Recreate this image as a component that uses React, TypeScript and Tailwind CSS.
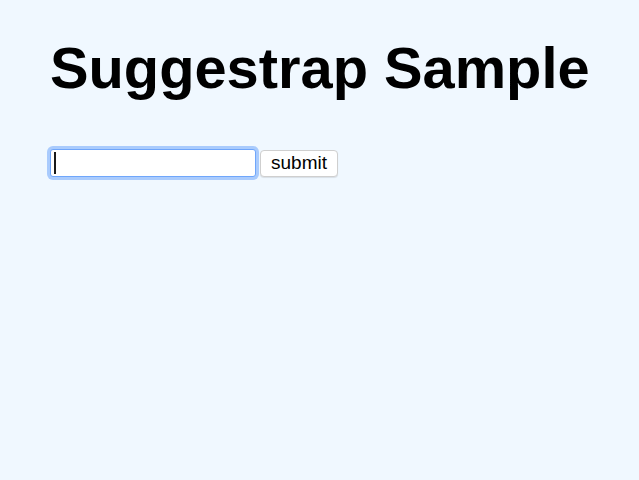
export default function App() {
  return (
    <div className="min-h-[480px] bg-[#f0f8ff] px-[50px] pt-[38px] font-['Liberation_Sans',Arial,sans-serif] text-black">
      <h1 className="whitespace-nowrap text-[57.8px] font-bold leading-[60px]">Suggestrap Sample</h1>
      <form className="mt-[51px] flex items-center gap-[4px]" onSubmit={(e) => e.preventDefault()}>
        <div className="relative">
          <input
            type="text"
            autoFocus
            className="block h-[28px] w-[206px] rounded-[3px] border border-[#6fa6fb] bg-white px-[3px] text-[19px] caret-transparent outline-none shadow-[0_0_0_3px_#a9cbfd]"
          />
          {/* caret */}
          <span className="pointer-events-none absolute left-[4px] top-[3px] h-[22px] w-[2px] bg-[#1a1a1a]" />
        </div>
        <button
          type="submit"
          className="h-[27px] rounded-[4px] border border-[#cfcfcf] bg-white px-[10px] text-[19px] leading-[22px] shadow-[0_1px_1px_rgba(0,0,0,0.1)]"
        >
          submit
        </button>
      </form>
    </div>
  )
}
